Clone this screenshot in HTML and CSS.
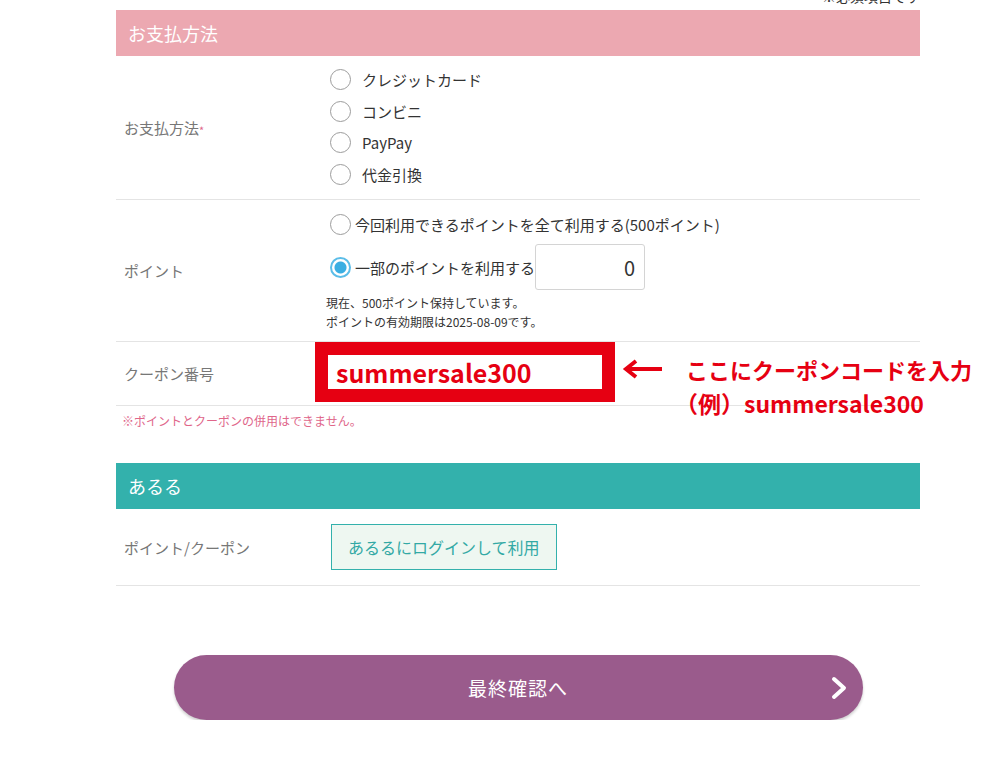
FILE: index.html
```html
<!DOCTYPE html>
<html lang="ja">
<head>
  <meta charset="UTF-8" />
  <meta name="viewport" content="width=device-width, initial-scale=1.0"/>
  <title>お支払方法</title>
  <link rel="stylesheet" href="styles.css">
</head>
<body>
  <div class="page">
    <p class="req">※必須項目です</p>

    <h2 class="sec sec-pay">お支払方法</h2>
    <div class="row">
      <div class="label">お支払方法<span class="must">*</span></div>
      <div class="value pay-list">
        <label class="opt"><input type="radio" name="pay"><span>クレジットカード</span></label>
        <label class="opt"><input type="radio" name="pay"><span>コンビニ</span></label>
        <label class="opt"><input type="radio" name="pay"><span>PayPay</span></label>
        <label class="opt"><input type="radio" name="pay"><span>代金引換</span></label>
      </div>
    </div>

    <div class="row">
      <div class="label">ポイント</div>
      <div class="value point">
        <label class="opt tight"><input type="radio" name="pt"><span>今回利用できるポイントを全て利用する(500ポイント)</span></label>
        <div class="part">
          <label class="opt tight"><input type="radio" name="pt" checked><span>一部のポイントを利用する</span></label>
          <input type="text" class="pt-input" value="0">
        </div>
        <p class="pt-note">現在、500ポイント保持しています。<br>ポイントの有効期限は2025-08-09です。</p>
      </div>
    </div>

    <div class="row coupon-row">
      <div class="label">クーポン番号</div>
      <div class="value coupon">
        <div class="coupon-box"><input type="text" value="summersale300"></div>
      </div>
      <div class="callout">
        <svg class="arrow" width="40" height="20" viewBox="0 0 40 20">
          <path d="M40 10 H5 M14 2 L4 10 L14 18" fill="none" stroke="#e60012" stroke-width="4"/>
        </svg>
        <div class="callout-text">
          <div>ここにクーポンコードを入力</div>
          <div class="callout-ex">（例）summersale300</div>
        </div>
      </div>
    </div>
    <p class="warn">※ポイントとクーポンの併用はできません。</p>

    <h2 class="sec sec-aruru">あるる</h2>
    <div class="row">
      <div class="label">ポイント/クーポン</div>
      <div class="value aruru">
        <button class="aruru-btn">あるるにログインして利用</button>
      </div>
    </div>

    <button class="next">最終確認へ
      <svg class="chev" width="16" height="24" viewBox="0 0 16 24">
        <path d="M3 3 L13 12 L3 21" fill="none" stroke="#fff" stroke-width="4" stroke-linecap="round" stroke-linejoin="round"/>
      </svg>
    </button>
  </div>
</body>
</html>
```

FILE: styles.css
```css
body {
  margin: 0;
  background-color: #fff;
  color: #333;
  font-family: "Noto Sans CJK JP", "Noto Sans", sans-serif;
  overflow: hidden;
}
.page {
  width: 804px;
  margin-left: 116px;
}
.req {
  margin: -12px 0 6px;
  font-size: 14px;
  line-height: 16px;
  text-align: right;
}
.sec {
  margin: 0;
  height: 46px;
  padding-left: 12px;
  color: #fff;
  font-size: 18px;
  font-weight: normal;
  line-height: 46px;
}
.sec-pay {
  background-color: #eca8b1;
}
.sec-aruru {
  background-color: #33b1ac;
}
.row {
  display: grid;
  grid-template-columns: 200px 1fr;
  border-bottom: 1px solid #e4e4e4;
}
.label {
  display: flex;
  align-items: center;
  padding-left: 8px;
  color: #777;
  font-size: 15px;
}
.must {
  color: #e0668a;
  font-size: 11px;
  align-self: flex-start;
  margin-top: -6px;
  position: relative;
  top: 50%;
}
.value {
  padding-left: 14px;
}
.opt {
  display: flex;
  align-items: center;
  gap: 11px;
  height: 31.5px;
  font-size: 15px;
  color: #333;
}
.opt input {
  appearance: none;
  -webkit-appearance: none;
  margin: 0;
  width: 21px;
  height: 21px;
  border: 1.5px solid #9c9c9c;
  border-radius: 50%;
  background-color: #fff;
  box-sizing: border-box;
}
.opt input:checked {
  border: 2px solid #5bbde8;
  background: radial-gradient(circle, #3aaee2 5.5px, #fff 6.5px);
}
.pay-list {
  padding-top: 8px;
  padding-bottom: 9px;
}
.point {
  padding-top: 8px;
  padding-bottom: 10px;
}
.opt.tight {
  gap: 4px;
  height: 32px;
}
.part {
  display: flex;
  align-items: center;
  height: 46px;
  margin-top: 4px;
}
.pt-input {
  box-sizing: border-box;
  width: 110px;
  height: 46px;
  margin-left: 0;
  padding: 0 9px 0 0;
  border: 1px solid #d4d4d4;
  border-radius: 3px;
  text-align: right;
  font-family: inherit;
  font-size: 20px;
  color: #333;
}
.pt-note {
  margin: 3px 0 0 -4px;
  font-size: 12px;
  line-height: 19px;
}
.coupon-row {
  position: relative;
}
.coupon {
  padding: 0 0 3px;
}
.coupon-box {
  box-sizing: border-box;
  width: 300px;
  height: 60px;
  margin-left: -1px;
  border: 13px solid #e60012;
  background-color: #fff;
}
.coupon-box input {
  box-sizing: border-box;
  width: 100%;
  height: 34px;
  border: none;
  padding: 0 0 0 8px;
  font-family: "Noto Sans CJK JP", sans-serif;
  font-size: 25px;
  font-weight: bold;
  color: #e60012;
  outline: none;
}
.callout {
  position: absolute;
  left: 506px;
  top: 10px;
  display: flex;
  gap: 24px;
  white-space: nowrap;
}
.arrow {
  margin-top: 7px;
}
.callout-text {
  color: #e60012;
  font-size: 22px;
  font-weight: bold;
  line-height: 34px;
}
.callout-ex {
  margin-left: -11px;
  font-size: 23px;
}
.warn {
  margin: 7px 0 34px;
  padding-left: 6px;
  color: #e0668a;
  font-size: 12px;
  line-height: 16px;
}
.aruru {
  padding: 15px 0 15px 15px;
}
.aruru-btn {
  box-sizing: border-box;
  height: 46px;
  padding: 0 16px;
  border: 1px solid #33b1ac;
  background-color: #eef7f1;
  color: #33a9a5;
  font-family: inherit;
  font-size: 16px;
}
.next {
  position: relative;
  display: block;
  width: 689px;
  height: 65px;
  margin: 69px auto 0;
  border: none;
  border-radius: 33px;
  background-color: #9a5b8c;
  box-shadow: 0 2px 3px rgba(0, 0, 0, 0.2);
  color: #fff;
  font-family: inherit;
  font-size: 19px;
  letter-spacing: 1px;
}
.chev {
  position: absolute;
  right: 16px;
  top: 21px;
}
```
